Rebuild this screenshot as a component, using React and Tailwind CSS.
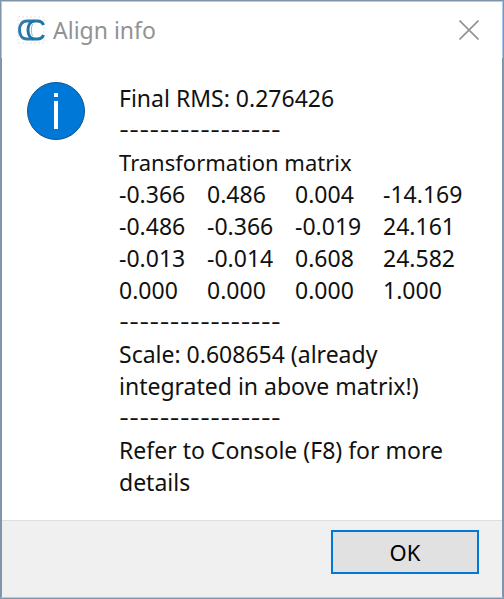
const MATRIX = [
  ["-0.366", "0.486", "0.004", "-14.169"],
  ["-0.486", "-0.366", "-0.019", "24.161"],
  ["-0.013", "-0.014", "0.608", "24.582"],
  ["0.000", "0.000", "0.000", "1.000"],
];

function AppLogo() {
  return (
    <svg className="size-7 shrink-0" viewBox="0 0 28 28" fill="none" aria-hidden="true">
      <rect x="1" y="1" width="26" height="26" stroke="#f0f0f0" strokeWidth="2" strokeDasharray="2 2" />
      <path
        d="M17 5H10C5 5 2.500 9 2.500 14C2.500 19 5 23 10 23H17"
        stroke="#2b7cac"
        strokeWidth="3"
      />
      <path
        d="M26.500 9C25.500 6.500 23.500 5 20.500 5H18C13.500 5 11 9 11 14C11 19 13.500 23 18 23H20.500C23.500 23 25.500 21.500 26.500 19"
        stroke="#1f75a6"
        strokeWidth="3"
      />
      <path d="M15.500 8C14 11 14 17 15.500 20" stroke="#8fbad4" strokeWidth="1" />
    </svg>
  );
}

function InfoIcon() {
  return (
    <svg className="size-[58px] shrink-0" viewBox="0 0 58 58" role="img" aria-label="Information">
      <circle cx="29" cy="29" r="28.500" fill="#0078d7" stroke="#11538c" />
      <rect x="27" y="11" width="4" height="4" fill="#fff" />
      <rect x="27" y="19" width="4" height="28" fill="#fff" />
    </svg>
  );
}

function Divider() {
  return <p className="font-['Inter',sans-serif] text-[22px]">----------------</p>;
}

function TitleBar() {
  return (
    <header className="flex h-14 items-center gap-2 border-x border-[#a9ccf2] bg-white pr-[23px] pl-[15px]">
      <AppLogo />
      <h1 className="grow text-[#929292]">Align info</h1>
      <button type="button" aria-label="Close">
        <svg className="size-5" viewBox="0 0 20 20" stroke="#929292" strokeWidth="1.600">
          <path d="M0.500 0.500L19.500 19.500M19.500 0.500L0.500 19.500" />
        </svg>
      </button>
    </header>
  );
}

export default function App() {
  return (
    <div
      role="dialog"
      aria-label="Align info"
      className="flex min-h-screen flex-col border border-[#8094aa] bg-[#8094aa] font-['Noto_Sans',sans-serif] text-[23px] leading-8 text-[#111111]"
    >
      <div className="h-px bg-[#a9ccf2]" />
      <TitleBar />
      <main className="mx-px flex grow items-start gap-[34px] bg-white px-[25px] pt-6 pb-[22px]">
        <InfoIcon />
        <div className="min-w-0 flex-1">
          <p>Final RMS: 0.276426</p>
          <Divider />
          <table className="w-[352px] table-fixed text-left">
            <caption className="text-left text-[22px]">Transformation matrix</caption>
            <tbody>
              {MATRIX.map((row, i) => (
                <tr key={i}>
                  {row.map((value, j) => (
                    <td key={j} className="p-0">
                      {value}
                    </td>
                  ))}
                </tr>
              ))}
            </tbody>
          </table>
          <Divider />
          <p>Scale: 0.608654 (already integrated in above matrix!)</p>
          <Divider />
          <p>Refer to Console (F8) for more details</p>
        </div>
      </main>
      <footer className="mx-px flex h-[77px] items-start justify-end border-t border-[#dfdfdf] bg-[#f0f0f0] px-[23px] pt-[9px]">
        <button
          type="button"
          className="h-11 w-[148px] border-2 border-[#0078d7] bg-[#e1e1e1] text-[22px] text-black"
        >
          OK
        </button>
      </footer>
      <div className="h-px bg-[#a9ccf2]" />
    </div>
  );
}
